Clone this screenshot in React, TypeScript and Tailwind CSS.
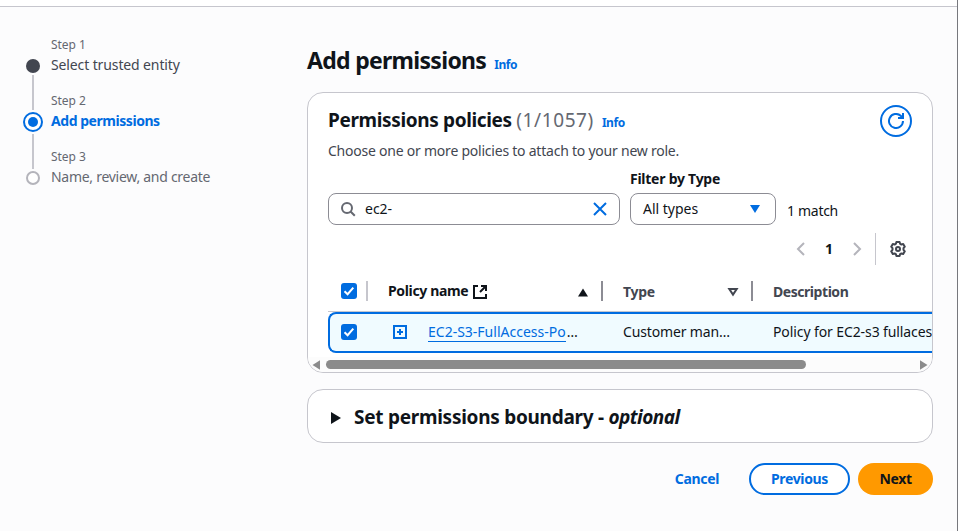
import React from "react";

const steps = [
  { label: "Step 1", title: "Select trusted entity", style: "text-[#424650] tracking-[-0.12px]" },
  { label: "Step 2", title: "Add permissions", style: "font-bold text-[#006ce0] tracking-[-0.45px]" },
  { label: "Step 3", title: "Name, review, and create", style: "text-[#656871] tracking-[-0.28px]" },
];

function StepNav() {
  return (
    <nav className="flex w-[307px] shrink-0 gap-2 pl-[23px] pt-[30px]">
      <div className="flex w-5 flex-col items-center pt-[22px]">
        <span className="size-3.5 rounded-full bg-[#424650]" />
        <span className="my-0.5 h-[35px] w-0.5 bg-[#c6c6cd]" />
        <span className="flex size-5 items-center justify-center rounded-full border-2 border-[#006ce0] bg-white">
          <span className="size-2.5 rounded-full bg-[#006ce0]" />
        </span>
        <span className="my-0.5 h-[35px] w-0.5 bg-[#c6c6cd]" />
        <span className="size-3.5 rounded-full border-2 border-[#b4b4bb] bg-white" />
      </div>
      <ol>
        {steps.map((s) => (
          <li key={s.label} className="h-14">
            <div className="text-xs leading-4 text-[#656871] tracking-[-0.05px]">{s.label}</div>
            <div className={`mt-0.5 whitespace-nowrap text-sm leading-5 ${s.style}`}>{s.title}</div>
          </li>
        ))}
      </ol>
    </nav>
  );
}

function Info() {
  return <a className="text-xs font-bold leading-4 tracking-[-0.45px] text-[#006ce0]">Info</a>;
}

function Checkbox() {
  return (
    <span className="flex size-4 shrink-0 items-center justify-center rounded-[3px] bg-[#006ce0]">
      <svg width="16" height="16" viewBox="0 0 16 16" fill="none" stroke="#fff" strokeWidth="2">
        <path d="M3.5 8.2 6.6 11.2 12.3 4.6" />
      </svg>
    </span>
  );
}

function TableHeader() {
  return (
    <div className="flex h-[41px] items-center border-b border-[#c6c6cd] text-sm font-bold">
      <div className="flex w-10 items-center justify-between pl-[13px]">
        <Checkbox />
        <span className="h-5 w-0.5 bg-[#c6c6cd]" />
      </div>
      <div className="flex w-[235px] items-center pl-5 text-[#0f141a]">
        <span className="whitespace-nowrap tracking-[-0.35px]">Policy name</span>
        <svg className="ml-1" width="16" height="16" viewBox="0 0 16 16" fill="none" stroke="currentColor" strokeWidth="2">
          <path d="M6 3H2v12h12v-4" />
          <path d="M9 3h5v5M14 3 8 9" />
        </svg>
        <svg className="ml-auto mr-3 mt-0.5" width="12" height="9" viewBox="0 0 12 9" fill="currentColor">
          <path d="M6 0.5 11 8.5H1Z" />
        </svg>
        <span className="h-5 w-0.5 bg-[#8c8c94]" />
      </div>
      <div className="flex w-[150px] items-center pl-5 text-[#424650]">
        <span className="pt-0.5 tracking-[-0.3px]">Type</span>
        <svg className="ml-auto mr-[12px] mt-0.5" width="12" height="10" viewBox="0 0 12 10" fill="none" stroke="currentColor" strokeWidth="2">
          <path d="M2.3 2.1h7.4L6 7.6Z" />
        </svg>
        <span className="h-5 w-0.5 bg-[#8c8c94]" />
      </div>
      <div className="pl-5 pt-0.5 tracking-[-0.45px] text-[#424650]">Description</div>
    </div>
  );
}

function PolicyRow() {
  return (
    <div className="flex h-[41px] items-center rounded-l-lg border-2 border-r-0 border-[#006ce0] bg-[#f0fbff] pb-px text-sm text-[#0f141a]">
      <div className="flex w-[62px] shrink-0 pl-[11px]">
        <Checkbox />
      </div>
      <svg className="shrink-0" width="16" height="16" viewBox="0 0 16 16" fill="none" stroke="#006ce0" strokeWidth="2">
        <path d="M2 2h12v12H2ZM8 5v6M5 8h6" />
      </svg>
      <div className="ml-5 w-[195px] shrink-0 whitespace-nowrap">
        <a className="border-b border-[#006ce0] text-[#006ce0]">EC2-S3-FullAccess-Po</a>
        <span className="ml-px">…</span>
      </div>
      <div className="w-[150px] shrink-0 whitespace-nowrap tracking-[-0.15px]">Customer man…</div>
      <div className="whitespace-nowrap tracking-[-0.1px]">Policy for EC2-s3 fullaces</div>
    </div>
  );
}

function Scrollbar() {
  return (
    <div className="mt-1 flex h-[15px] items-center bg-[#fcfcfc] pl-[4px] pr-1 text-[#8b8b8b]">
      <svg width="8" height="10" viewBox="0 0 8 10" fill="currentColor">
        <path d="M8 0.2v9.6L0.5 5Z" />
      </svg>
      <span className="ml-1.5 h-[9px] w-[480px] rounded-full bg-[#8b8b8b]" />
      <svg className="ml-auto" width="8" height="10" viewBox="0 0 8 10" fill="currentColor">
        <path d="M0 0.2v9.6L7.5 5Z" />
      </svg>
    </div>
  );
}

function Policies() {
  return (
    <section className="mt-[17px] h-[281px] overflow-hidden rounded-2xl border border-[#c6c6cd] bg-white">
      <div className="pl-5">
        <div className="flex justify-between pr-5 pt-3">
          <div>
            <h2 className="flex items-baseline pt-px text-[19px] leading-7 text-[#0f141a]">
              <span className="whitespace-pre font-bold tracking-[-0.36px]">Permissions policies </span>
              <span className="mr-2 tracking-[0.6px] text-[#656871]">(1/1057)</span>
              <Info />
            </h2>
            <p className="mt-[7px] text-sm leading-5 tracking-[-0.23px] text-[#424650]">Choose one or more policies to attach to your new role.</p>
          </div>
          <button className="flex size-8 items-center justify-center rounded-full border-2 border-[#006ce0] text-[#006ce0]">
            <svg width="16" height="16" viewBox="0 0 16 16" fill="none" stroke="currentColor" strokeWidth="2">
              <path d="M15 8a7 7 0 1 1-2.3-5.2L15 5" />
              <path d="M15 0v5h-5" />
            </svg>
          </button>
        </div>
        <div className="mt-2 flex items-end gap-2.5 text-sm">
          <div className="flex h-8 w-[292px] items-center rounded-lg border border-[#8c8c94] px-3 text-[#0f141a]">
            <svg width="16" height="16" viewBox="0 0 16 16" fill="none" stroke="#656871" strokeWidth="2">
              <circle cx="6" cy="7" r="5" />
              <path d="m9.5 10.5 4.3 4.3" />
            </svg>
            <span className="ml-2">ec2-</span>
            <svg className="ml-auto" width="14" height="14" viewBox="0 0 14 14" fill="none" stroke="#006ce0" strokeWidth="2">
              <path d="m1 1 12 12M13 1 1 13" />
            </svg>
          </div>
          <div>
            <div className="mb-1 font-bold leading-5 tracking-[-0.25px] text-[#0f141a]">Filter by Type</div>
            <div className="flex h-8 w-[146px] items-center rounded-lg border border-[#8c8c94] px-3 text-[#0f141a]">
              <span>All types</span>
              <svg className="ml-auto mr-[3px]" width="10" height="8" viewBox="0 0 10 8" fill="#006ce0">
                <path d="M0 0h10L5 8Z" />
              </svg>
            </div>
          </div>
          <div className="mb-1 ml-px leading-5 tracking-[-0.3px] text-[#0f141a]">1 match</div>
        </div>
        <div className="mt-2 flex h-8 items-center justify-end pr-[26px]">
          <svg width="10" height="14" viewBox="0 0 10 14" fill="none" stroke="#b4b4bb" strokeWidth="2">
            <path d="M8 1 2 7l6 6" />
          </svg>
          <span className="mx-[19px] text-sm font-bold text-[#0f141a]">1</span>
          <svg width="10" height="14" viewBox="0 0 10 14" fill="none" stroke="#b4b4bb" strokeWidth="2">
            <path d="m2 1 6 6-6 6" />
          </svg>
          <span className="ml-[13px] mr-3.5 h-8 w-px bg-[#c6c6cd]" />
          <svg width="16" height="16" viewBox="0 0 16 16" fill="none" stroke="#424650" strokeWidth="2" strokeLinejoin="round">
            <path d="M6.4 1h3.2l.5 1.8 1.3.7 1.8-.5 1.6 2.7-1.3 1.5v1.6l1.3 1.5-1.6 2.7-1.8-.5-1.3.7-.5 1.8H6.4l-.5-1.8-1.3-.7-1.8.5-1.6-2.7 1.3-1.5V7.2L1.2 5.7 2.8 3l1.8.5 1.3-.7Z" />
            <circle cx="8" cy="8" r="2" />
          </svg>
        </div>
        <div className="mt-[6px]">
          <TableHeader />
          <PolicyRow />
        </div>
      </div>
      <Scrollbar />
    </section>
  );
}

export default function App() {
  return (
    <div className="flex h-[531px] w-[958px] flex-col overflow-hidden border-r border-[#77787d] bg-[#fcfcfd] font-['Noto_Sans',sans-serif]">
      <div className="h-[7px] shrink-0 border-b border-[#c6c6cd] bg-white" />
      <div className="flex">
        <StepNav />
        <main className="w-[626px] shrink-0 pt-[38px]">
          <h1 className="flex items-baseline gap-2 text-[23px] font-bold leading-[30px] text-[#0f141a]">
            <span className="tracking-[-0.7px]">Add permissions</span>
            <Info />
          </h1>
          <Policies />
          <section className="mt-4 flex h-[54px] items-center rounded-2xl border border-[#c6c6cd] bg-white pl-[23px] text-[#0f141a]">
            <svg className="mt-1" width="10" height="12" viewBox="0 0 10 12" fill="currentColor">
              <path d="M0 0v12l10-6Z" />
            </svg>
            <h2 className="ml-[13px] mt-0.5 whitespace-nowrap text-[19px] font-bold leading-7 tracking-[-0.27px]">
              Set permissions boundary - <em className="tracking-[-0.55px]">optional</em>
            </h2>
          </section>
          <div className="mt-5 flex justify-end gap-2 text-sm font-bold">
            <button className="mr-[22px] h-8 tracking-[-0.35px] text-[#006ce0]">Cancel</button>
            <button className="h-8 w-[101px] rounded-full border-2 border-[#006ce0] bg-white tracking-[-0.35px] text-[#006ce0]">Previous</button>
            <button className="h-8 w-[75px] rounded-full bg-[#ff9900] tracking-[-0.35px] text-[#0f141a]">Next</button>
          </div>
        </main>
      </div>
    </div>
  );
}
